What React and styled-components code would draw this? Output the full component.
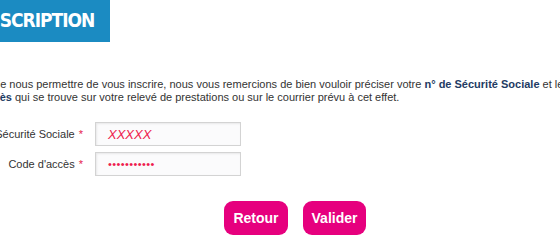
import React from "react";
import styled, { createGlobalStyle } from "styled-components";

const Global = createGlobalStyle`
  html, body {
    margin: 0;
    padding: 0;
    background: #fff;
    overflow: hidden;
  }
  body {
    font-family: "Liberation Sans", Arial, sans-serif;
    color: #333;
  }
`;

const Page = styled.div`
  margin-left: -28px;
  width: 700px;
`;

const Title = styled.h1`
  display: inline-block;
  margin: 0 0 0 -7px;
  height: 42px;
  padding: 0 16px;
  box-sizing: border-box;
  background: #1b8bc2;
  color: #fff;
  font-family: "DejaVu Sans Condensed", "Liberation Sans", Arial, sans-serif;
  font-stretch: condensed;
  font-weight: bold;
  font-size: 19px;
  letter-spacing: -1px;
  line-height: 40px;
`;

const Intro = styled.p`
  margin: 36px 0 0;
  font-size: 11px;
  line-height: 13px;
  white-space: nowrap;
  color: #333;
  b {
    color: #1e3b63;
  }
`;

const Form = styled.div`
  margin-top: 18px;
  display: flex;
  flex-direction: column;
  gap: 6px;
`;

const Row = styled.div`
  display: flex;
  align-items: center;
`;

const Label = styled.label`
  width: 111px;
  margin-right: 12px;
  display: flex;
  justify-content: flex-end;
  font-size: 11px;
  color: #333;
  white-space: nowrap;
  span {
    color: #e5194b;
    margin-left: 4px;
  }
`;

const Field = styled.div`
  width: 146px;
  height: 24px;
  box-sizing: border-box;
  border: 1px solid #d3d3d3;
  background: #fbfbfc;
  box-shadow: inset 1px 1px 2px rgba(0, 0, 0, 0.08);
  padding-left: 12px;
  display: flex;
  align-items: center;
  color: #ee1c4e;
  font-size: ${(p) => (p.$dots ? "11px" : "13px")};
  font-style: ${(p) => (p.$dots ? "normal" : "italic")};
  letter-spacing: ${(p) => (p.$dots ? "0.4px" : "0")};
`;

const Buttons = styled.div`
  display: flex;
  gap: 15px;
  margin-top: 25px;
  padding-left: 252px;
`;

const Button = styled.button`
  height: 34px;
  width: ${(p) => p.$w}px;
  border: none;
  border-radius: 9px;
  background: #e6007e;
  color: #fff;
  font-family: "Liberation Sans", Arial, sans-serif;
  font-weight: bold;
  font-size: 14px;
  padding: 0;
  cursor: pointer;
`;

export default function App() {
  return (
    <>
      <Global />
      <Page>
        <Title>INSCRIPTION</Title>
        <Intro>
          Afin de nous permettre de vous inscrire, nous vous remercions de bien
          vouloir préciser votre <b>n° de Sécurité Sociale</b> et le <b>code</b>
          <br />
          <b>d'accès</b> qui se trouve sur votre relevé de prestations ou sur le
          courrier prévu à cet effet.
        </Intro>
        <Form>
          <Row>
            <Label>
              N° de Sécurité Sociale<span>*</span>
            </Label>
            <Field>XXXXX</Field>
          </Row>
          <Row>
            <Label>
              Code d'accès<span>*</span>
            </Label>
            <Field $dots>•••••••••••</Field>
          </Row>
        </Form>
        <Buttons>
          <Button $w={64}>Retour</Button>
          <Button $w={63}>Valider</Button>
        </Buttons>
      </Page>
    </>
  );
}
